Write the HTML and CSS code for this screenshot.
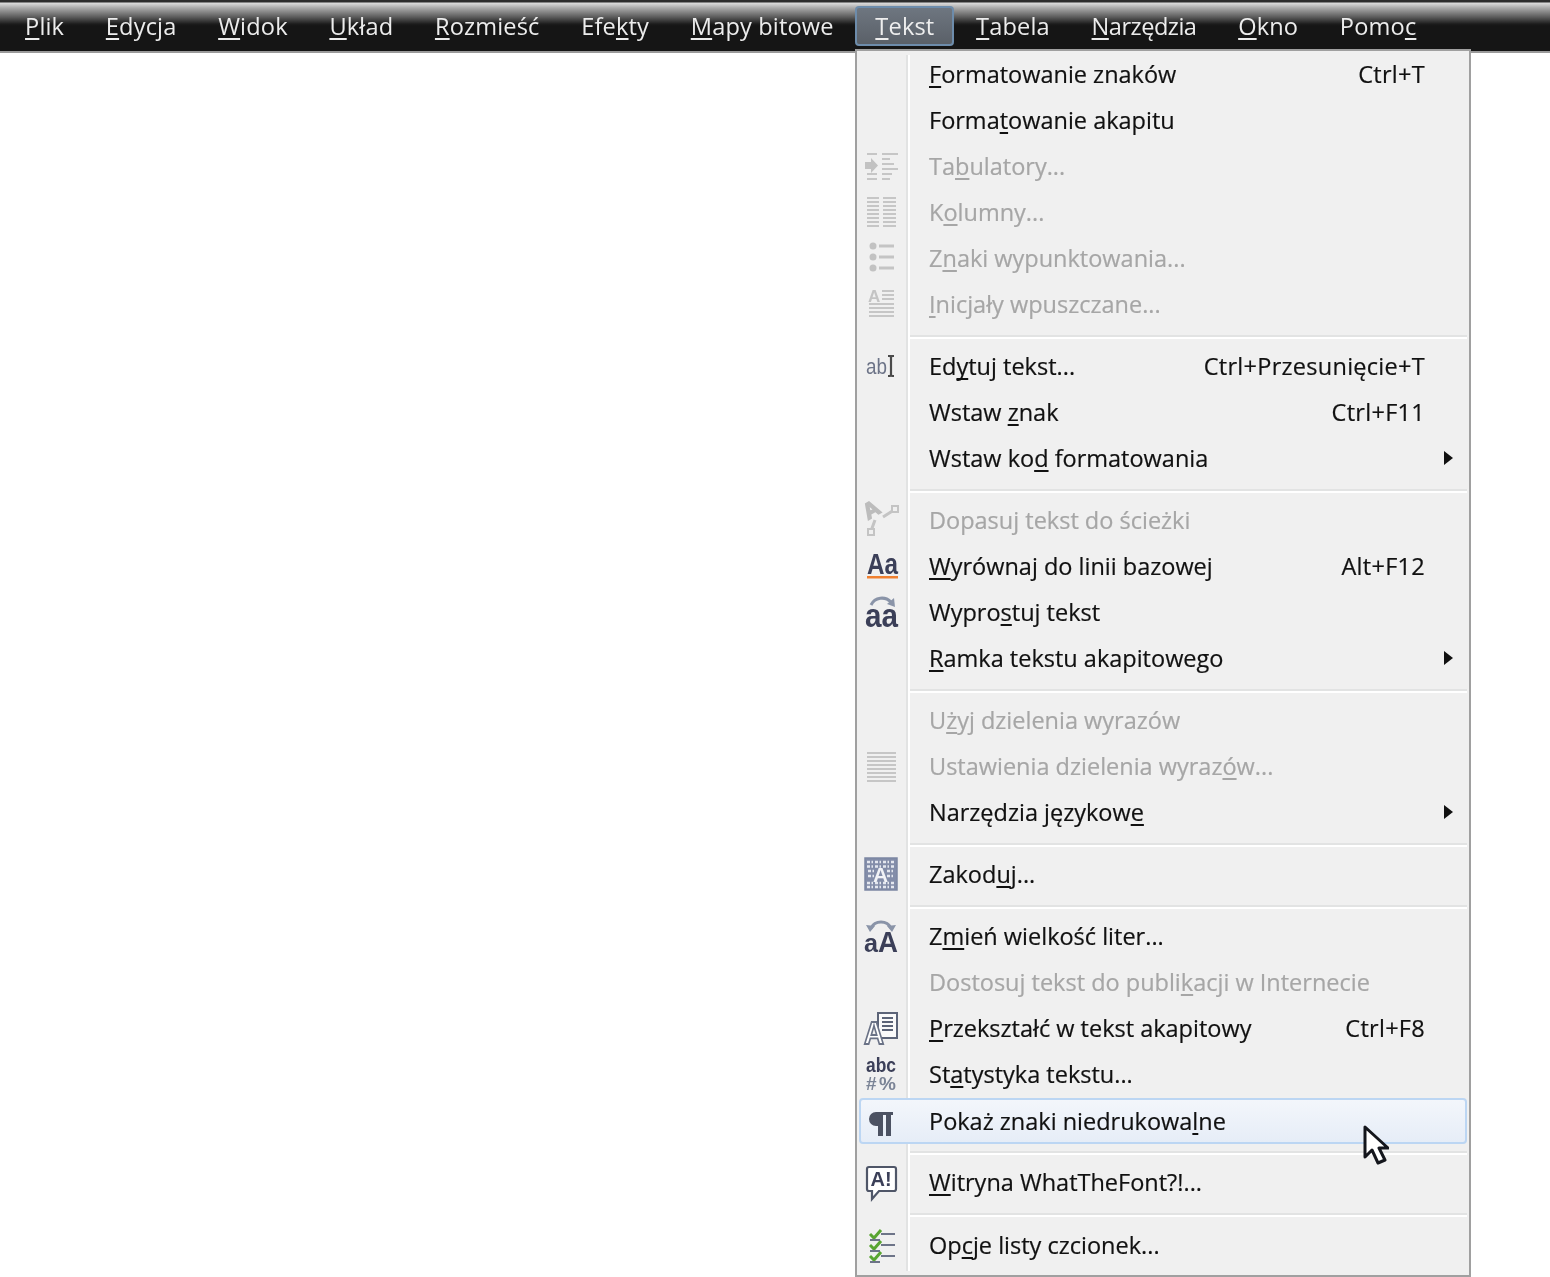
FILE: index.html
```html
<!DOCTYPE html>
<html lang="pl">
<head>
<meta charset="utf-8">
<title>Menu Tekst</title>
<link rel="stylesheet" href="styles.css">
</head>
<body>
<div class="app">
<nav class="bar">
  <span class="top"><u>P</u>lik</span>
  <span class="top"><u>E</u>dycja</span>
  <span class="top"><u>W</u>idok</span>
  <span class="top"><u>U</u>kład</span>
  <span class="top"><u>R</u>ozmieść</span>
  <span class="top">Efe<u>k</u>ty</span>
  <span class="top"><u>M</u>apy bitowe</span>
  <span class="top active"><u>T</u>ekst</span>
  <span class="top"><u>T</u>abela</span>
  <span class="top narrow"><u>N</u>arzędzia</span>
  <span class="top"><u>O</u>kno</span>
  <span class="top">Pomo<u>c</u></span>
</nav>
<section class="menu">
  <div class="row"><span class="ico"></span><span class="label"><u>F</u>ormatowanie znaków</span><span class="key">Ctrl+T</span></div>
  <div class="row"><span class="ico"></span><span class="label">Forma<u>t</u>owanie akapitu</span></div>
  <div class="row off"><span class="ico"><svg class="svg" viewBox="0 0 36 36"><path class="g" d="M2 14h6v-4l7 7.500-7 7.500v-4H2z"/><path class="gs" d="M4 6h10M4 26h10M4 31h10M19 6h16M19 11h8M19 16h12M19 21h16M19 26h10M19 31h8"/></svg></span><span class="label">Ta<u>b</u>ulatory...</span></div>
  <div class="row off"><span class="ico"><svg class="svg" viewBox="0 0 36 36"><path class="gs" d="M4 4h12M4 8h12M4 12h12M4 16h12M4 20h12M4 24h12M4 28h12M4 32h12M20 4h13M20 8h13M20 12h13M20 16h13M20 20h13M20 24h13M20 28h13M20 32h13"/></svg></span><span class="label">K<u>o</u>lumny...</span></div>
  <div class="row off"><span class="ico"><svg class="svg" viewBox="0 0 36 36"><circle class="g" cx="10" cy="6" r="3.500"/><circle class="g" cx="10" cy="17" r="3.500"/><circle class="g" cx="10" cy="28" r="3.500"/><path class="gt" d="M16 6h15M16 17h15M16 28h15"/></svg></span><span class="label">Z<u>n</u>aki wypunktowania...</span></div>
  <div class="row off"><span class="ico"><svg class="svg" viewBox="0 0 36 36"><text class="gl" x="5" y="16" font-size="17" font-weight="700">A</text><path class="gs" d="M19 5h12M19 9h12M19 13h12M6 18h25M6 22h25M6 26h25M6 30h25"/></svg></span><span class="label"><u>I</u>nicjały wpuszczane...</span></div>
  <div class="sep"></div>
  <div class="row"><span class="ico"><svg class="svg" viewBox="0 0 36 36"><text class="bl" x="3" y="26" font-size="22" textLength="21" lengthAdjust="spacingAndGlyphs">ab</text><path class="cur" d="M25 8h2l1 1 1-1h2M25 28h2l1-1 1 1h2M28 9v18"/></svg></span><span class="label">Ed<u>y</u>tuj tekst...</span><span class="key">Ctrl+Przesunięcie+T</span></div>
  <div class="row"><span class="ico"></span><span class="label">Wstaw <u>z</u>nak</span><span class="key">Ctrl+F11</span></div>
  <div class="row sub"><span class="ico"></span><span class="label">Wstaw ko<u>d</u> formatowania</span><span class="arrow"></span></div>
  <div class="sep"></div>
  <div class="row off"><span class="ico"><svg class="svg" viewBox="0 0 36 36"><path class="gt" d="M8 29l4-11M20 15L31 8"/><rect class="box" x="5" y="27" width="6" height="6"/><rect class="box" x="29" y="4" width="6" height="6"/><text class="gd" x="5" y="18" font-size="22" font-weight="700" rotate="-30">A</text></svg></span><span class="label">Dopasuj tekst do ścieżki</span></div>
  <div class="row"><span class="ico"><svg class="svg" viewBox="0 0 36 36"><text class="dk" x="4" y="26" font-size="30" font-weight="700" textLength="31" lengthAdjust="spacingAndGlyphs">Aa</text><rect x="4" y="28" width="31" height="2.500" fill="#f08030"/></svg></span><span class="label"><u>W</u>yrównaj do linii bazowej</span><span class="key">Alt+F12</span></div>
  <div class="row"><span class="ico"><svg class="svg" viewBox="0 0 36 36"><path class="arc" d="M8 11C12 3 22 2 28 8"/><path fill="#8a94a8" d="M24 10l8 3-1-9z"/><text class="dk" x="2" y="33" font-size="33" font-weight="700" textLength="33" lengthAdjust="spacingAndGlyphs">aa</text></svg></span><span class="label">Wypro<u>s</u>tuj tekst</span></div>
  <div class="row sub"><span class="ico"></span><span class="label"><u>R</u>amka tekstu akapitowego</span><span class="arrow"></span></div>
  <div class="sep"></div>
  <div class="row off"><span class="ico"></span><span class="label">U<u>ż</u>yj dzielenia wyrazów</span></div>
  <div class="row off"><span class="ico"><svg class="svg" viewBox="0 0 36 36"><path class="gs" d="M4 5h29M4 9h29M4 13h29M4 17h29M4 21h29M4 25h29M4 29h29M4 33h29"/></svg></span><span class="label">Ustawienia dzielenia wyraz<u>ó</u>w...</span></div>
  <div class="row sub"><span class="ico"></span><span class="label">Narzędzia językow<u>e</u></span><span class="arrow"></span></div>
  <div class="sep"></div>
  <div class="row"><span class="ico"><svg class="svg" viewBox="0 0 36 36"><rect x="2" y="2" width="32" height="32" fill="#838da9" stroke="#7c87a3" stroke-width="1.500"/><path stroke="#e4e7ef" stroke-width="2.500" stroke-dasharray="3 1.500 1.500 2" fill="none" d="M4 6h28M4 10.500h28M4 27h28M4 31h28M5 15h7M24 15h7M5 20h7M24 20h7"/><text x="10" y="26" font-size="21" font-weight="700" fill="#f2f3f7" class="tx">A</text></svg></span><span class="label">Zakod<u>u</u>j...</span></div>
  <div class="sep"></div>
  <div class="row"><span class="ico"><svg class="svg" viewBox="0 0 36 36"><path class="arc" d="M8 10C12 2 24 2 28 10"/><path fill="#8a94a8" d="M3 7l9 1-5 6zM33 7l-9 1 5 6z"/><text class="dk" x="1" y="34" font-size="25" font-weight="700" textLength="14" lengthAdjust="spacingAndGlyphs">a</text><text class="dk" x="15" y="34" font-size="29" font-weight="700" textLength="20" lengthAdjust="spacingAndGlyphs">A</text></svg></span><span class="label">Z<u>m</u>ień wielkość liter...</span></div>
  <div class="row off"><span class="ico"></span><span class="label">Dostosuj tekst do publi<u>k</u>acji w Internecie</span></div>
  <div class="row"><span class="ico"><svg class="svg" viewBox="0 0 36 36"><rect x="15" y="3" width="19" height="25" fill="#fafafa" stroke="#5c6478" stroke-width="2"/><path stroke="#5c6478" stroke-width="2" d="M19 8h11M19 12h11M19 16h11M19 20h11"/><text x="1" y="34" font-size="31" font-weight="700" fill="#fff" stroke="#6a7286" stroke-width="1.800" class="tx" textLength="20" lengthAdjust="spacingAndGlyphs">A</text></svg></span><span class="label"><u>P</u>rzekształć w tekst akapitowy</span><span class="key">Ctrl+F8</span></div>
  <div class="row"><span class="ico"><svg class="svg" viewBox="0 0 36 36"><text class="dk" x="3" y="16" font-size="20" font-weight="700" textLength="30" lengthAdjust="spacingAndGlyphs">abc</text><text x="3" y="34" font-size="19" font-weight="700" fill="#7b8496" class="tx" textLength="30">#%</text></svg></span><span class="label">St<u>a</u>tystyka tekstu...</span></div>
  <div class="row hover"><span class="ico"><svg class="svg" viewBox="0 0 36 36"><path fill="#4c5262" d="M18 9h-5a7 7 0 0 0 0 14h2v10h5V12h3v21h5V12h2V9z"/></svg></span><span class="label">Pokaż znaki niedrukowa<u>l</u>ne</span></div>
  <div class="sep"></div>
  <div class="row"><span class="ico"><svg class="svg" viewBox="0 0 36 36"><path fill="#fff" stroke="#4f5668" stroke-width="2.200" d="M6 3h25a2 2 0 0 1 2 2v20a2 2 0 0 1-2 2H16l-7 8v-8H6a2 2 0 0 1-2-2V5a2 2 0 0 1 2-2z"/><text class="dk" x="7.500" y="22" font-size="20" font-weight="700">A!</text></svg></span><span class="label"><u>W</u>itryna WhatTheFont?!...</span></div>
  <div class="sep wide"></div>
  <div class="row"><span class="ico"><svg class="svg" viewBox="0 0 36 36"><path class="chk" d="M7 7l4 4 7-8M7 18l4 4 7-8M7 29l4 4 7-8"/><path class="ln" d="M7 13h10M18 7h14M7 24h10M18 18h14M7 35h10M18 29h14"/></svg></span><span class="label">Op<u>c</u>je listy czcionek...</span></div>
</section>
<svg class="pointer" viewBox="0 0 26 41"><path fill="#fff" stroke="#14161c" stroke-width="3" stroke-linejoin="round" d="M2 2v30l7-7 6 13 7-3-6-12h9z"/></svg>
</div>
</body>
</html>
```

FILE: styles.css
```css
html, body { margin: 0; padding: 0; background: #fff; }
.app {
  position: relative;
  width: 1550px;
  height: 1277px;
  overflow: hidden;
  font-family: "Open Sans", "Noto Sans", sans-serif;
  font-size: 23.5px;
  filter: blur(0.6px);
}
u {
  text-decoration-thickness: 2px;
  text-underline-offset: 3px;
  text-decoration-skip-ink: none;
}
.bar {
  display: flex;
  height: 48px;
  padding: 3px 0 0 4.200px;
  background: linear-gradient(#2c2c2c 0 2px, #dcdcdc 3px, #a8a8a8 8px, #5c5c5c 17px, #1c1c1c 24px, #151515 26px);
  border-bottom: 2px solid #9a9a9a;
}
.top {
  display: flex;
  align-items: center;
  padding: 0 20.850px;
  height: 46px;
  font-size: 23.6px;
  letter-spacing: 0.15px;
  color: #ececec;
  box-sizing: border-box;
  white-space: nowrap;
}
.top.narrow { letter-spacing: -0.5px; }
.top.active {
  margin: 3px 0.850px 0;
  height: 40px;
  border: 2px solid #6d8cab;
  border-radius: 4px;
  background: linear-gradient(#6e7680, #5a6068);
  padding: 0 18px;
  color: #eee;
}
.menu {
  position: absolute;
  left: 855px;
  top: 49px;
  width: 616px;
  height: 1228px;
  box-sizing: border-box;
  padding: 1px 2px 0;
  background: #f0f0f0;
  border: 2px solid #a0a0a0;
  color: #111;
  -webkit-text-stroke: 0.2px;
}
.menu::before {
  content: "";
  position: absolute;
  left: 49px;
  top: 4px;
  bottom: 4px;
  width: 2px;
  background: #e2e3e3;
  box-shadow: 2px 0 0 #fff;
}
.row {
  position: relative;
  display: flex;
  align-items: center;
  height: 46px;
  padding-right: 42px;
  padding-bottom: 2px;
  box-sizing: border-box;
  white-space: nowrap;
}
.row.sub { padding-right: 14px; }
.row.off { color: #a6a6a6; }
.row.hover {
  border: 2px solid #bcd6f3;
  border-radius: 4px;
  background: linear-gradient(#f3f6fb, #e6edf7);
  padding-bottom: 0;
}
.row.hover .ico { margin-left: -2px; }
.ico {
  flex: none;
  width: 44px;
  height: 36px;
  display: flex;
  align-items: center;
  justify-content: center;
}
.label { margin-left: 26px; }
.key { margin-left: auto; letter-spacing: 0.28px; }
.arrow {
  margin-left: auto;
  width: 0;
  height: 0;
  border-left: 9px solid #111;
  border-top: 7px solid transparent;
  border-bottom: 7px solid transparent;
}
.sep {
  height: 16px;
  margin-left: 49px;
  background: linear-gradient(transparent 0 7px, #e2e3e3 7px 9px, #fff 9px 11px, transparent 11px);
}
.sep.wide { height: 17px; }
.svg { width: 36px; height: 36px; display: block; overflow: visible; -webkit-text-stroke: 0; }
.svg text { font-family: "Liberation Sans", sans-serif; }
.g { fill: #c2c2c2; }
.gs { stroke: #c6c6c6; stroke-width: 2.200; fill: none; }
.gt { stroke: #c4c4c4; stroke-width: 3; fill: none; }
.gl { fill: #c4c4c4; }
.gd { fill: #bcbcbc; stroke: #bcbcbc; stroke-width: 1.500; }
.box { fill: #f0f0f0; stroke: #c4c4c4; stroke-width: 2; }
.bl { fill: #6d7488; }
.cur { stroke: #4a4a4a; stroke-width: 2.200; fill: none; }
.dk { fill: #3b3f58; }
.arc { stroke: #8a94a8; stroke-width: 3; fill: none; }
.chk { stroke: #59a532; stroke-width: 3; fill: none; }
.ln { stroke: #6d7488; stroke-width: 2; fill: none; }
.pointer {
  position: absolute;
  left: 1363px;
  top: 1125px;
  width: 26px;
  height: 41px;
}
```
